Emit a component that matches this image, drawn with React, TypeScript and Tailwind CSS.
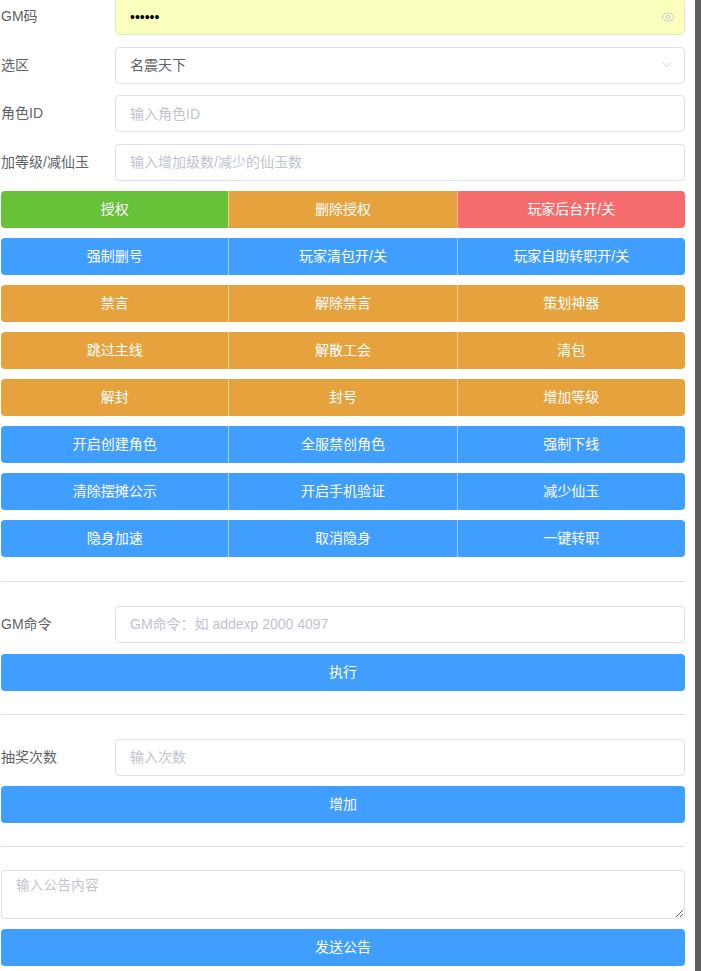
import { Eye, ChevronDown } from "lucide-react";

type Btn = { label: string; color: string };

const GREEN = "bg-[#67c23a]";
const ORANGE = "bg-[#e6a23c]";
const RED = "bg-[#f56c6c]";
const BLUE = "bg-[#409eff]";

const ROWS: Btn[][] = [
  [
    { label: "授权", color: GREEN },
    { label: "删除授权", color: ORANGE },
    { label: "玩家后台开/关", color: RED },
  ],
  [
    { label: "强制删号", color: BLUE },
    { label: "玩家清包开/关", color: BLUE },
    { label: "玩家自助转职开/关", color: BLUE },
  ],
  [
    { label: "禁言", color: ORANGE },
    { label: "解除禁言", color: ORANGE },
    { label: "策划神器", color: ORANGE },
  ],
  [
    { label: "跳过主线", color: ORANGE },
    { label: "解散工会", color: ORANGE },
    { label: "清包", color: ORANGE },
  ],
  [
    { label: "解封", color: ORANGE },
    { label: "封号", color: ORANGE },
    { label: "增加等级", color: ORANGE },
  ],
  [
    { label: "开启创建角色", color: BLUE },
    { label: "全服禁创角色", color: BLUE },
    { label: "强制下线", color: BLUE },
  ],
  [
    { label: "清除摆摊公示", color: BLUE },
    { label: "开启手机验证", color: BLUE },
    { label: "减少仙玉", color: BLUE },
  ],
  [
    { label: "隐身加速", color: BLUE },
    { label: "取消隐身", color: BLUE },
    { label: "一键转职", color: BLUE },
  ],
];

function FormRow({ label, children }: { label: string; children: React.ReactNode }) {
  return (
    <div className="flex items-center h-[37px]">
      <label className="w-[114px] shrink-0 text-[14px] text-[#606266]">{label}</label>
      <div className="flex-1 h-full">{children}</div>
    </div>
  );
}

function TextInput({ placeholder }: { placeholder: string }) {
  return (
    <input
      placeholder={placeholder}
      className="w-full h-full px-[14px] rounded-[4px] border border-[#dcdfe6] bg-white text-[14px] text-[#606266] placeholder:text-[#c0c4cc] outline-none"
    />
  );
}

function Divider() {
  return <div className="h-px bg-[#dcdfe6]" />;
}

function WideButton({ label }: { label: string }) {
  return (
    <button className="w-full h-[37px] rounded-[4px] bg-[#409eff] text-white text-[14px]">
      {label}
    </button>
  );
}

export default function App() {
  return (
    <div
      className="flex w-[701px] h-[971px] overflow-hidden bg-white"
      style={{ fontFamily: '"Liberation Sans", "Noto Sans CJK SC", sans-serif' }}
    >
      <div className="w-[695px] pl-[1px] pr-[10px] mt-[-2px]">
        {/* basic fields */}
        <div className="flex flex-col gap-[11.5px]">
          <FormRow label="GM码">
            <div className="relative h-full">
              <input
                type="password"
                defaultValue="123456"
                className="w-full h-full px-[14px] rounded-[4px] border border-[#e3e6cf] bg-[#faffbd] text-[14px] text-black outline-none"
              />
              <Eye
                size={14}
                strokeWidth={1.5}
                className="absolute right-[10px] top-1/2 -translate-y-1/2 text-[#c0c4cc]"
              />
            </div>
          </FormRow>
          <FormRow label="选区">
            <div className="relative h-full flex items-center px-[14px] rounded-[4px] border border-[#dcdfe6] bg-white text-[14px] text-[#606266]">
              名震天下
              <ChevronDown
                size={14}
                strokeWidth={1.5}
                className="absolute right-[10px] top-1/2 -translate-y-1/2 text-[#c0c4cc]"
              />
            </div>
          </FormRow>
          <FormRow label="角色ID">
            <TextInput placeholder="输入角色ID" />
          </FormRow>
          <FormRow label="加等级/减仙玉">
            <TextInput placeholder="输入增加级数/减少的仙玉数" />
          </FormRow>
        </div>

        {/* action buttons */}
        <div className="flex flex-col gap-[10px] mt-[10px]">
          {ROWS.map((row, i) => (
            <div key={i} className="flex h-[37px] rounded-[4px] overflow-hidden">
              {row.map((b, j) => (
                <button
                  key={j}
                  className={`flex-1 text-white text-[14px] ${b.color} ${
                    j > 0 ? "border-l border-white/50" : ""
                  }`}
                >
                  {b.label}
                </button>
              ))}
            </div>
          ))}
        </div>

        <div className="mt-[24px]">
          <Divider />
        </div>

        {/* GM command */}
        <div className="mt-[24px] flex flex-col gap-[11px]">
          <FormRow label="GM命令">
            <TextInput placeholder="GM命令：如 addexp 2000 4097" />
          </FormRow>
          <WideButton label="执行" />
        </div>

        <div className="mt-[23px]">
          <Divider />
        </div>

        {/* lottery */}
        <div className="mt-[24px] flex flex-col gap-[10px]">
          <FormRow label="抽奖次数">
            <TextInput placeholder="输入次数" />
          </FormRow>
          <WideButton label="增加" />
        </div>

        <div className="mt-[23px]">
          <Divider />
        </div>

        {/* notice */}
        <div className="mt-[23px] flex flex-col gap-[10px]">
          <textarea
            placeholder="输入公告内容"
            className="block w-full h-[49px] px-[14px] py-[5px] rounded-[4px] border border-[#dcdfe6] text-[13.33px] text-[#606266] placeholder:text-[#c0c4cc] outline-none resize-y tracking-[0.5px]"
          />
          <WideButton label="发送公告" />
        </div>
      </div>
      <div className="w-[6px] h-full bg-[#5d5d5d]" />
    </div>
  );
}
